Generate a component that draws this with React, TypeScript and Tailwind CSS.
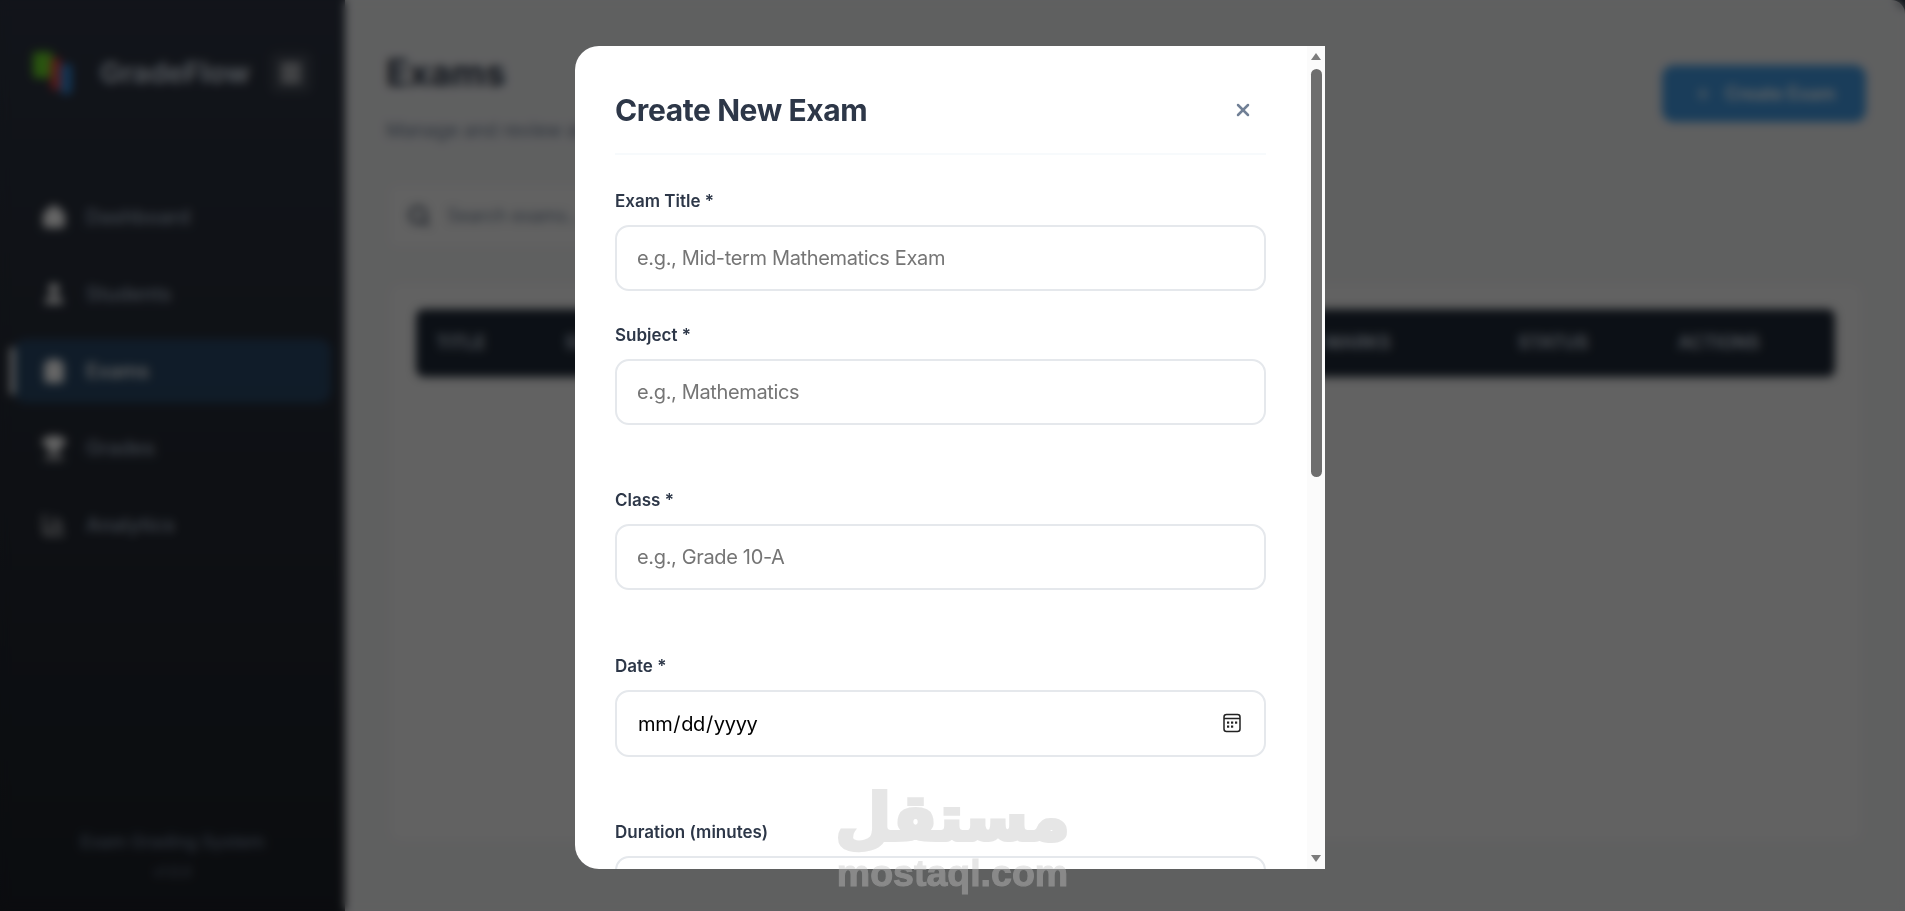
import { Menu, Home, User, ClipboardList, Trophy, BarChart3, Search, Plus, X } from "lucide-react";

const nav = [
  { label: "Dashboard", Icon: Home, fill: "currentColor" },
  { label: "Students", Icon: User, fill: "currentColor" },
  { label: "Exams", Icon: ClipboardList, active: true, fill: "currentColor" },
  { label: "Grades", Icon: Trophy, fill: "currentColor" },
  { label: "Analytics", Icon: BarChart3, fill: "none" },
];

function CalendarGlyph() {
  return (
    <svg width="18" height="20" viewBox="0 0 18 20" fill="none" className="text-[#222]">
      <rect x="1" y="1.5" width="16" height="17" rx="2.5" stroke="currentColor" strokeWidth="1.5" />
      <path d="M1 5.5h16" stroke="currentColor" strokeWidth="1.5" />
      <g fill="currentColor">
        <rect x="4" y="8.5" width="2.2" height="2.2" />
        <rect x="8" y="8.5" width="2.2" height="2.2" />
        <rect x="12" y="8.5" width="2.2" height="2.2" />
        <rect x="4" y="12.5" width="2.2" height="2.2" />
        <rect x="8" y="12.5" width="2.2" height="2.2" />
      </g>
    </svg>
  );
}

function Field({ label, placeholder, type = "text", className = "" }: { label: string; placeholder?: string; type?: string; className?: string }) {
  return (
    <div className={className}>
      <label className="block text-[17px] leading-[26px] font-semibold text-[#2d3748]">{label}</label>
      <div className="relative mt-[11px]">
        <input
          type={type}
          placeholder={placeholder}
          className={`block w-full rounded-[14px] border-2 border-[#e5e8ec] bg-white px-[20px] text-[20px] text-black placeholder:text-[#757575] outline-none tracking-[-0.35px] [&::-webkit-calendar-picker-indicator]:opacity-0 ${type === "date" ? "h-[67px]" : "h-[66px]"}`}
        />
        {type === "date" && (
          <div className="pointer-events-none absolute right-[25px] top-[23px]"><CalendarGlyph /></div>
        )}
      </div>
    </div>
  );
}

export default function App() {
  return (
    <div className="relative flex h-[911px] w-full overflow-hidden bg-[#1f2937] font-['Inter',sans-serif]">
      {/* page behind the dialog */}
      <aside className="flex w-[345px] shrink-0 flex-col bg-gradient-to-b from-[#2d3442] to-[#1c2027] px-[14px] pb-[29px] pt-[52px] text-[#a0aec0]">
        <div className="flex items-center pl-[19px]">
          <div className="relative h-[42px] w-[42px] shrink-0">
            <div className="absolute left-0 top-0 h-[26px] w-[20px] rounded bg-[#68d328]" />
            <div className="absolute left-[18px] top-[6px] h-[32px] w-[10px] rounded bg-[#e53e3e]" />
            <div className="absolute left-[27px] top-[12px] h-[30px] w-[12px] rounded bg-[#3182ce]" />
          </div>
          <span className="ml-[25px] text-[28.5px] font-bold text-[#cbd5e0]">GradeFlow</span>
          <div className="ml-[20px] flex h-[42px] w-[42px] items-center justify-center rounded-lg bg-white/10 text-white"><Menu size={26} strokeWidth={3.5} /></div>
        </div>
        <nav className="mt-[90px] flex flex-col gap-[13px]">
          {nav.map(({ label, Icon, active, fill }) => (
            <div key={label} className={`relative flex h-[64px] items-center gap-[19px] rounded-xl pl-[27px] text-[20px] font-medium ${active ? "bg-[#2b5a86]/60 text-white" : ""}`}>
              {active && <div className="absolute -left-[4px] top-[8px] h-[48px] w-[5px] rounded bg-white" />}
              <Icon size={26} fill={fill} className="text-white" />
              <span>{label}</span>
            </div>
          ))}
        </nav>
        <div className="mt-auto text-center">
          <div className="text-[17.5px] font-medium text-[#718096]">Exam Grading System</div>
          <div className="mt-[6px] text-[14px] text-[#718096]">v1.0.0</div>
        </div>
      </aside>

      <main className="flex-1 rounded-tr-[14px] bg-[#eeeff1] pl-[41px] pr-[39px] pt-[49px]">
        <div className="flex items-start justify-between">
          <div>
            <h1 className="text-[37px] font-bold leading-[48px] text-[#2d3748]">Exams</h1>
            <p className="mt-[20px] text-[19px] text-[#718096]">Manage and review all your exams</p>
          </div>
          <button className="mt-[16px] flex h-[57px] w-[204px] items-center justify-center gap-[12px] rounded-xl bg-[#4299e1] text-[18px] font-semibold text-white"><Plus size={20} />Create Exam</button>
        </div>
        <div className="mt-[36px] flex h-[68px] w-[700px] items-center gap-[16px] rounded-xl border border-[#e0e2e6] bg-[#f4f4f4] px-[20px] text-[18px] text-[#718096]"><Search size={24} strokeWidth={3} className="text-[#4a5568]" />Search exams...</div>
        <section className="mt-[30px] h-[565px] rounded-2xl border border-[#e0e2e6] bg-[#f4f4f4] pl-[29px] pr-[30px] pt-[28px]">
          <div className="grid h-[68px] grid-cols-[129px_345px_200px_215px_193px_160px_1fr] items-center rounded-lg bg-[#1f2937] pl-[20px] text-[18px] font-semibold text-[#cbd5e0]">
            <span>TITLE</span><span>SUBJECT</span><span>CLASS</span><span>DATE</span><span>MARKS</span><span>STATUS</span><span>ACTIONS</span>
          </div>
        </section>
      </main>

      {/* dialog layer */}
      <div className="absolute inset-0 flex items-start justify-center bg-black/60 pt-[46px] backdrop-blur-[5px]">
        <div className="relative ml-[-5px] h-[823px] w-[750px] overflow-hidden rounded-l-[24px] bg-white pl-[40px] pr-[59px]">
          <div className="flex h-[109px] items-center justify-between border-b-2 border-[#f7fafc] pt-[20px]">
            <h2 className="text-[30px] font-bold leading-[40px] tracking-[-0.4px] text-[#2d3748]">Create New Exam</h2>
            <X size={20} strokeWidth={3} className="mr-[13px] text-[#718096]" />
          </div>
          <Field className="mt-[33px]" label="Exam Title *" placeholder="e.g., Mid-term Mathematics Exam" />
          <Field className="mt-[31px]" label="Subject *" placeholder="e.g., Mathematics" />
          <Field className="mt-[62px]" label="Class *" placeholder="e.g., Grade 10-A" />
          <Field className="mt-[63px]" label="Date *" type="date" />
          <Field className="mt-[62px]" label="Duration (minutes)" />
          <div className="absolute bottom-0 right-0 top-0 w-[18px] bg-[#fbfbfb]">
            <div className="mx-auto mt-[7px] h-0 w-0 border-x-[5px] border-b-[7px] border-x-transparent border-b-[#7c7c7c]" />
            <div className="mx-auto mt-[9px] h-[408px] w-[11px] rounded-full bg-[#6e6e6e]" />
            <div className="absolute bottom-[7px] left-[4px] h-0 w-0 border-x-[5px] border-t-[7px] border-x-transparent border-t-[#7c7c7c]" />
          </div>
        </div>
      </div>

      {/* site watermark */}
      <div className="pointer-events-none absolute left-[838px] top-[775px] flex w-[229px] flex-col items-center text-[#c4c4c4] opacity-[.42]">
        <span className="font-['DejaVu_Sans',sans-serif] text-[64px] font-bold leading-[86px] [-webkit-text-stroke:4px_#c4c4c4]">مستقل</span>
        <span className="mt-[-8px] font-['Liberation_Sans',sans-serif] text-[37.5px] font-bold leading-[40px] [-webkit-text-stroke:1px_#c4c4c4]">mostaql.com</span>
      </div>
    </div>
  );
}
